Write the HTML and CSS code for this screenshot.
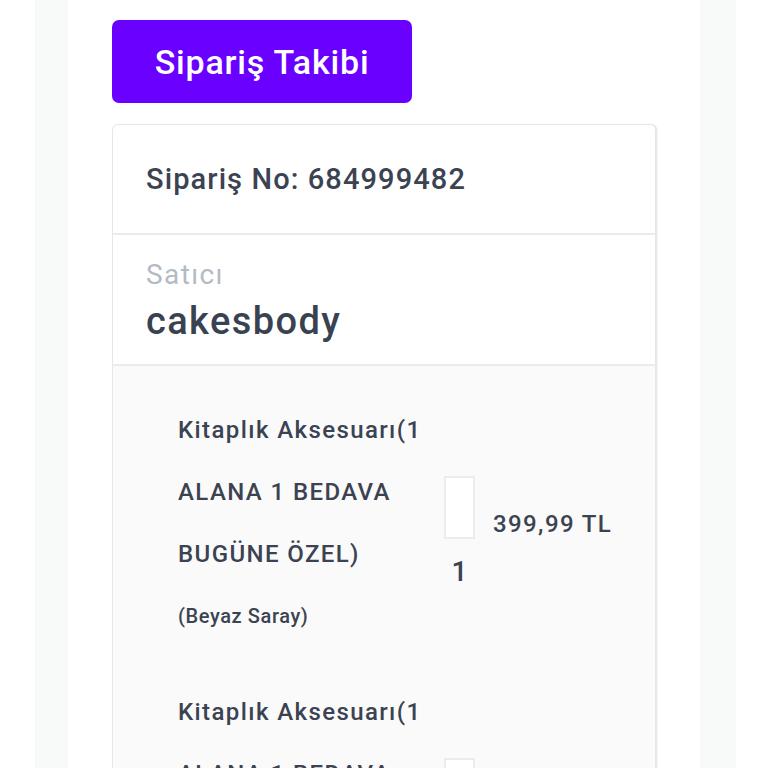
FILE: index.html
```html
<!DOCTYPE html>
<html lang="tr">
<head>
<meta charset="utf-8">
<title>Sipariş Takibi</title>
<link rel="stylesheet" href="styles.css">
</head>
<body>
<div class="page">
  <div class="gutter">
    <main class="content">
      <div class="title-btn">Sipariş Takibi</div>
      <section class="card">
        <div class="card-sec order">Sipariş No: 684999482</div>
        <div class="card-sec seller">
          <div class="label">Satıcı</div>
          <div class="seller-name">cakesbody</div>
        </div>
        <div class="card-sec products">
          <div class="product">
            <div class="name">
              <div class="line">Kitaplık Aksesuarı(1</div>
              <div class="line">ALANA 1 BEDAVA</div>
              <div class="line">BUGÜNE ÖZEL)</div>
              <div class="line variant">(Beyaz Saray)</div>
            </div>
            <div class="qty">
              <div class="thumb"></div>
              <div class="count">1</div>
            </div>
            <div class="price">399,99 TL</div>
          </div>
          <div class="product">
            <div class="name">
              <div class="line">Kitaplık Aksesuarı(1</div>
              <div class="line">ALANA 1 BEDAVA</div>
              <div class="line">BUGÜNE ÖZEL)</div>
              <div class="line variant">(Beyaz Saray)</div>
            </div>
            <div class="qty">
              <div class="thumb"></div>
              <div class="count">1</div>
            </div>
            <div class="price">399,99 TL</div>
          </div>
        </div>
      </section>
    </main>
  </div>
</div>
</body>
</html>
```

FILE: styles.css
```css
html, body {
  margin: 0;
  padding: 0;
  background: #ffffff;
  font-family: Roboto, "Noto Sans", "Liberation Sans", sans-serif;
  color: #3b4352;
}

.page {
  padding: 0 32px 0 35px;
  height: 768px;
  overflow: hidden;
}

.gutter {
  background: #f8f9f9;
  padding: 0 36px 0 33px;
  height: 100%;
}

.content {
  background: #ffffff;
  height: 100%;
  padding: 20px 43px 0 44px;
}

.title-btn {
  width: 300px;
  height: 83px;
  box-sizing: border-box;
  background: #6a00ff;
  border-radius: 7px;
  color: #ffffff;
  font-size: 34px;
  font-weight: 500;
  letter-spacing: 0.8px;
  display: flex;
  align-items: center;
  justify-content: center;
}

.card {
  margin-top: 21px;
  border: 1px solid #e7e7e7;
  border-right-width: 2px;
  border-radius: 6px;
  background: #ffffff;
  box-shadow: 1px 0 2px rgba(0,0,0,0.04);
}

.card-sec {
  border-bottom: 2px solid #ebebeb;
  padding-left: 33px;
}

.order {
  height: 108px;
  display: flex;
  align-items: center;
  font-size: 29px;
  font-weight: 500;
  letter-spacing: 1.1px;
}

.seller {
  height: 131px;
  box-sizing: border-box;
  padding-top: 20px;
}

.label {
  font-size: 28px;
  color: #b3bac5;
  line-height: 40px;
  letter-spacing: 1.4px;
}

.seller-name {
  font-size: 38px;
  font-weight: 500;
  line-height: 52px;
  color: #394251;
  letter-spacing: 1.4px;
}

.products {
  background: #fafafa;
  border-bottom: none;
  padding: 33px 0 0 65px;
  border-radius: 0 0 6px 6px;
}

.product {
  display: flex;
  align-items: flex-start;
  margin-bottom: 34px;
}

.name {
  width: 266px;
  font-size: 24px;
  font-weight: 500;
  letter-spacing: 1.4px;
}

.line {
  line-height: 62px;
  white-space: nowrap;
}

.variant {
  font-size: 20px;
  letter-spacing: 0.6px;
}

.qty {
  width: 31px;
  margin-top: 77px;
  display: flex;
  flex-direction: column;
  align-items: center;
}

.thumb {
  width: 31px;
  height: 63px;
  box-sizing: border-box;
  border: 2px solid #ececec;
  background: #ffffff;
}

.count {
  font-size: 28px;
  font-weight: 500;
  line-height: 66px;
}

.price {
  margin-left: 18px;
  margin-top: 110px;
  font-size: 24px;
  font-weight: 500;
  line-height: 30px;
  letter-spacing: 1.4px;
  white-space: nowrap;
}
```
